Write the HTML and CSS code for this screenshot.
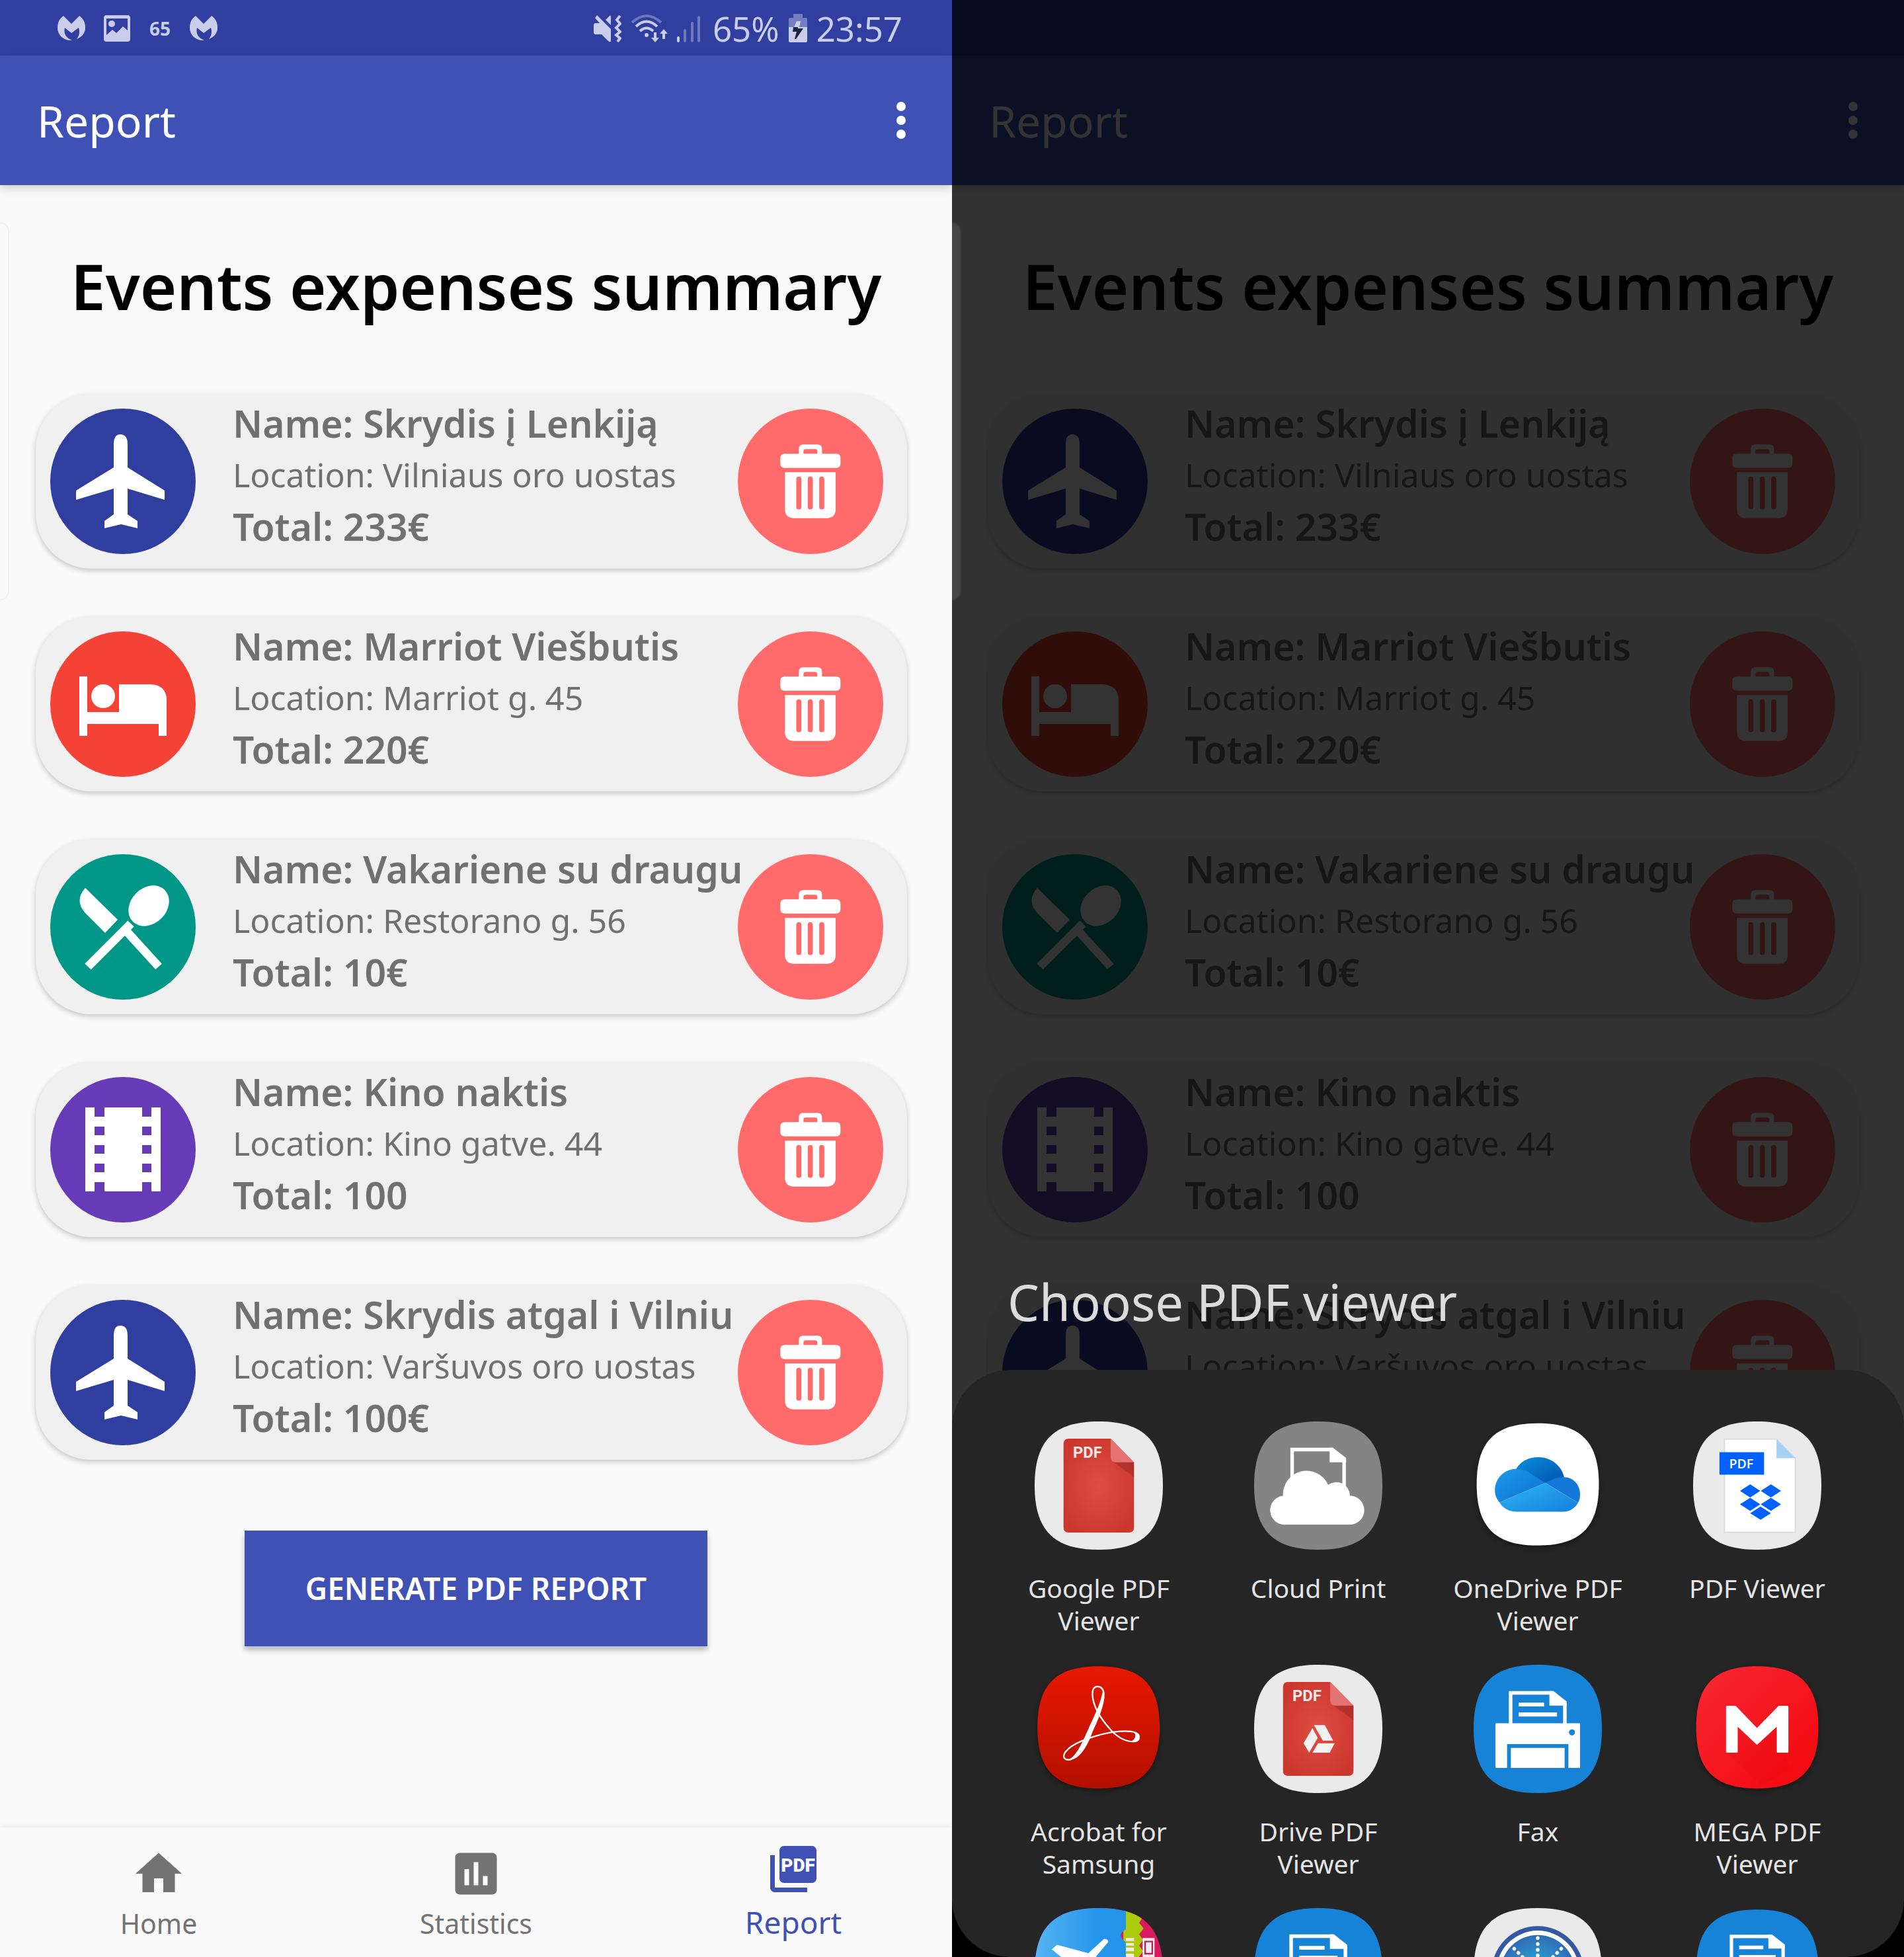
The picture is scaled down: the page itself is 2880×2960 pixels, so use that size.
FILE: index.html
```
<!DOCTYPE html>
<html lang="en">
<head>
<meta charset="utf-8">
<meta name="viewport" content="width=device-width, initial-scale=1">
<title>Report</title>
<link rel="stylesheet" href="styles.css">
</head>
<body>
<svg class="sprite" aria-hidden="true">
  <defs>
    <linearGradient id="acrobat-bg" x1="0" y1="0" x2="0" y2="1"><stop offset="0" stop-color="#e81800"/><stop offset="1" stop-color="#b31000"/></linearGradient>
    <linearGradient id="mega-bg" x1="0" y1="0" x2="1" y2="1"><stop offset="0.1" stop-color="#f6262f"/><stop offset="0.8" stop-color="#f30c14"/></linearGradient>
    <radialGradient id="pdf-red" cx="0.5" cy="0.5" r="0.6"><stop offset="0" stop-color="#df4d43"/><stop offset="1" stop-color="#cb362d"/></radialGradient>
    <linearGradient id="od-back" x1="0" y1="0" x2="1" y2="1"><stop offset="0.2" stop-color="#0883d4"/><stop offset="0.9" stop-color="#0058b0"/></linearGradient>
    <linearGradient id="od-left" x1="0" y1="0" x2="1" y2="1"><stop offset="0" stop-color="#1c9ceb"/><stop offset="0.8" stop-color="#0f75d6"/></linearGradient>
    <linearGradient id="od-front" x1="0" y1="0" x2="1" y2="1"><stop offset="0.1" stop-color="#2cb0f0"/><stop offset="1" stop-color="#1480dc"/></linearGradient>
    <linearGradient id="travel-bg" x1="0" y1="0" x2="1" y2="0"><stop offset="0" stop-color="#55b6f2"/><stop offset="0.7" stop-color="#2494ea"/></linearGradient>
    <radialGradient id="globe-bg"><stop offset="0" stop-color="#2ab4d8"/><stop offset="1" stop-color="#2f6cb5"/></radialGradient>
    <path id="squircle" d="M253 0C430 0 506 76 506 253S430 506 253 506S0 430 0 253S76 0 253 0Z"/>
    <clipPath id="squircle-clip"><use href="#squircle"/></clipPath>
    <g id="folded-doc">
      <path d="M146 236V111H310L360 150V236" fill="none" stroke="#fff" stroke-width="14"/>
      <path d="M299 104H315L367 145V161H299ZM178 149H278V164H178ZM178 188H329V204H178Z" fill="#fff"/>
    </g>
    <g id="red-pdf">
      <path d="M134 68H300L392 161V418Q392 438 372 438H134Q114 438 114 418V88Q114 68 134 68Z" fill="url(#pdf-red)"/>
      <path d="M312 161H392V218Z" fill="#000" opacity="0.15"/>
      <path d="M300 68L392 161H320Q300 161 300 141Z" fill="#e57373"/>
      <text x="151" y="144" class="glyph-pdf">PDF</text>
    </g>
  </defs>
  <symbol id="i-plane" viewBox="0 0 220 220">
    <path d="M106 39Q117 39 117 54V89L173 124V138L117 121V160L132 170V181L107 175L82 181V170L96 160V121L39 138V124L96 89V54Q96 39 106 39Z" fill="#fff"/>
  </symbol>
  <symbol id="i-bed" viewBox="0 0 220 220">
    <path d="M44 68H56V122H104V80H153Q176 82 176 104V158H164V140H56V158H44Z" fill="#fff"/><circle cx="80" cy="98" r="18" fill="#fff"/>
  </symbol>
  <symbol id="i-food" viewBox="0 0 220 220">
    <path d="M53 51L102 99L83 119L53 89Q36 70 53 51Z" fill="#fff"/>
    <path d="M57 170L122 105M114 115L164 170" fill="none" stroke="#fff" stroke-width="13"/>
    <ellipse cx="149" cy="78" rx="34" ry="27" transform="rotate(-45 149 78)" fill="#fff"/>
  </symbol>
  <symbol id="i-film" viewBox="0 0 220 220">
    <path fill-rule="evenodd" fill="#fff" d="M53 46H67V60H82V46H139V60H153V46H167V173H153V159H139V173H82V159H67V173H53ZM67 75V88H82V75ZM67 103V116H82V103ZM67 131V144H82V131ZM139 75V88H153V75ZM139 103V116H153V103ZM139 131V144H153V131Z"/>
  </symbol>
  <symbol id="i-trash" viewBox="110 114 660 660">
    <path fill-rule="evenodd" fill="#fff" d="M323 319H387V297Q387 277 407 277H472Q492 277 492 297V319H556Q576 319 576 339V363Q576 383 556 383H323Q303 383 303 363V339Q303 319 323 319ZM408 319H471V308Q471 298 461 298H418Q408 298 408 308Z"/>
    <path d="M324 403H554V570Q554 611 513 611H365Q324 611 324 570Z" fill="#fff"/>
    <path d="M387 434V560M439 434V560M491 434V560" stroke="#ff6b6b" stroke-width="23" stroke-linecap="round"/>
  </symbol>
  <symbol id="i-more" viewBox="0 0 24 24"><path fill="currentColor" d="M12 8a2 2 0 1 0 0-4 2 2 0 0 0 0 4zm0 2a2 2 0 1 0 0 4 2 2 0 0 0 0-4zm0 6a2 2 0 1 0 0 4 2 2 0 0 0 0-4z"/></symbol>
  <symbol id="i-malware" viewBox="0 0 42 38">
    <path fill="currentColor" d="M9 0L21 12L33 0C39 4 42 10 42 18C42 26 37 32 29 35C33 30 34 24 32 18L21 26L11 18C9 26 12 33 22 37C9 38 0 29 0 18C0 10 3 4 9 0Z"/>
  </symbol>
  <symbol id="i-image" viewBox="0 0 40 40">
    <path fill="currentColor" fill-rule="evenodd" d="M4 0H36Q40 0 40 4V36Q40 40 36 40H4Q0 40 0 36V4Q0 0 4 0ZM4 5V30L13 22L19 27L29 17L36 23V5Z"/><circle cx="12" cy="13" r="5" fill="currentColor"/>
  </symbol>
</svg>

<div class="gallery">
  <section class="phone">
    <div class="statusbar">
      <div class="status-group status-left">
        <svg class="s-icon s-malware"><use href="#i-malware"/></svg>
        <svg class="s-icon s-image"><use href="#i-image"/></svg>
        <span class="status-temp">65</span>
        <svg class="s-icon s-malware"><use href="#i-malware"/></svg>
      </div>
      <div class="status-group status-right">
        <svg class="s-mute" viewBox="0 0 42 44" fill="currentColor"><path d="M0 17Q0 14 3 14H9L2 6L5 2L26 23V42Q24 43 22 41L12 31H3Q0 31 0 28Z"/><path d="M18 9L24 3Q26 2 26 4V17Z"/><path d="M40 3L35 9L40 15L34 21L40 27L34 32L40 37L36 42" fill="none" stroke="currentColor" stroke-width="4"/></svg>
        <svg class="s-wifi" viewBox="0 0 56 44" fill="none" stroke="currentColor" stroke-width="4"><path d="M2 13Q24-7 46 13" opacity="0.4"/><path d="M8 19Q24 4 40 19M14 26Q24 17 34 26"/><circle cx="24" cy="32" r="3" fill="currentColor" stroke="none"/><path d="M37 28V38M50 38V27" stroke-width="4"/><path d="M31 36H43L37 43ZM44 30H56L50 23Z" fill="currentColor" stroke="none"/></svg>
        <svg class="s-signal" viewBox="0 0 36 44" stroke="currentColor" stroke-width="4" stroke-linecap="round"><path d="M2 36V41"/><path d="M12 25V41M23 14V41M33 5V41" opacity="0.4"/></svg>
        <span class="status-text">65%</span>
        <svg class="s-battery" viewBox="0 0 28 44"><path d="M7 0H21V6H26Q28 6 28 8V20H0V8Q0 6 2 6H7Z" fill="currentColor" opacity="0.45"/><path d="M0 20H28V41Q28 43 26 43H2Q0 43 0 41Z" fill="currentColor"/><path d="M12 11H18L16 20H8Z" fill="currentColor"/><path d="M7 20H14V22H22L11 38H9L12 27H6Z" fill="#1c2143"/></svg>
        <time class="status-text">23:57</time>
      </div>
    </div>
    <header class="appbar">
      <h1 class="appbar-title">Report</h1>
      <button class="menu-button" type="button" aria-label="More options"><svg class="menu-icon"><use href="#i-more"/></svg></button>
    </header>
    <main class="content">
      <div class="edge-handle"></div>
      <h2 class="heading">Events expenses summary</h2>
      <ul class="events">
        <li class="event"><span class="badge badge-flight"><svg><use href="#i-plane"/></svg></span><div class="event-text"><p class="event-name">Name: Skrydis į Lenkiją</p><p class="event-location">Location: Vilniaus oro uostas</p><p class="event-name">Total: 233€</p></div><button class="badge badge-delete" type="button" aria-label="Delete"><svg><use href="#i-trash"/></svg></button></li>
        <li class="event"><span class="badge badge-hotel"><svg><use href="#i-bed"/></svg></span><div class="event-text"><p class="event-name">Name: Marriot Viešbutis</p><p class="event-location">Location: Marriot g. 45</p><p class="event-name">Total: 220€</p></div><button class="badge badge-delete" type="button" aria-label="Delete"><svg><use href="#i-trash"/></svg></button></li>
        <li class="event"><span class="badge badge-food"><svg><use href="#i-food"/></svg></span><div class="event-text"><p class="event-name">Name: Vakariene su draugu</p><p class="event-location">Location: Restorano g. 56</p><p class="event-name">Total: 10€</p></div><button class="badge badge-delete" type="button" aria-label="Delete"><svg><use href="#i-trash"/></svg></button></li>
        <li class="event"><span class="badge badge-film"><svg><use href="#i-film"/></svg></span><div class="event-text"><p class="event-name">Name: Kino naktis</p><p class="event-location">Location: Kino gatve. 44</p><p class="event-name">Total: 100</p></div><button class="badge badge-delete" type="button" aria-label="Delete"><svg><use href="#i-trash"/></svg></button></li>
        <li class="event"><span class="badge badge-flight"><svg><use href="#i-plane"/></svg></span><div class="event-text"><p class="event-name">Name: Skrydis atgal i Vilniu</p><p class="event-location">Location: Varšuvos oro uostas</p><p class="event-name">Total: 100€</p></div><button class="badge badge-delete" type="button" aria-label="Delete"><svg><use href="#i-trash"/></svg></button></li>
      </ul>
      <button class="generate" type="button">GENERATE PDF REPORT</button>
    </main>
    <nav class="tabs">
      <a class="tab" href="#home"><svg class="tab-icon" viewBox="0 0 24 24"><path fill="currentColor" d="M10 20v-6h4v6h5v-8h3L12 3 2 12h3v8z"/></svg>Home</a>
      <a class="tab" href="#statistics"><svg class="tab-icon" viewBox="0 0 24 24"><path fill="currentColor" d="M19 3H5c-1.100 0-2 .9-2 2v14c0 1.100.9 2 2 2h14c1.100 0 2-.9 2-2V5c0-1.100-.9-2-2-2zM9 17H7v-7h2v7zm4 0h-2V7h2v10zm4 0h-2v-4h2v4z"/></svg>Statistics</a>
      <a class="tab tab-active" href="#report"><svg class="tab-icon" viewBox="0 0 24 24"><path fill="currentColor" d="M20 2H8c-1.100 0-2 .9-2 2v12c0 1.100.9 2 2 2h12c1.100 0 2-.9 2-2V4c0-1.100-.9-2-2-2zM4 6H2v14c0 1.100.9 2 2 2h14v-2H4V6z"/><text x="14" y="13" class="tab-pdf">PDF</text></svg>Report</a>
    </nav>
  </section>

  <section class="phone">
    <div class="statusbar"></div>
    <header class="appbar">
      <h1 class="appbar-title">Report</h1>
      <button class="menu-button" type="button" aria-label="More options"><svg class="menu-icon"><use href="#i-more"/></svg></button>
    </header>
    <main class="content">
      <h2 class="heading">Events expenses summary</h2>
      <ul class="events">
        <li class="event"><span class="badge badge-flight"><svg><use href="#i-plane"/></svg></span><div class="event-text"><p class="event-name">Name: Skrydis į Lenkiją</p><p class="event-location">Location: Vilniaus oro uostas</p><p class="event-name">Total: 233€</p></div><button class="badge badge-delete" type="button" aria-label="Delete"><svg><use href="#i-trash"/></svg></button></li>
        <li class="event"><span class="badge badge-hotel"><svg><use href="#i-bed"/></svg></span><div class="event-text"><p class="event-name">Name: Marriot Viešbutis</p><p class="event-location">Location: Marriot g. 45</p><p class="event-name">Total: 220€</p></div><button class="badge badge-delete" type="button" aria-label="Delete"><svg><use href="#i-trash"/></svg></button></li>
        <li class="event"><span class="badge badge-food"><svg><use href="#i-food"/></svg></span><div class="event-text"><p class="event-name">Name: Vakariene su draugu</p><p class="event-location">Location: Restorano g. 56</p><p class="event-name">Total: 10€</p></div><button class="badge badge-delete" type="button" aria-label="Delete"><svg><use href="#i-trash"/></svg></button></li>
        <li class="event"><span class="badge badge-film"><svg><use href="#i-film"/></svg></span><div class="event-text"><p class="event-name">Name: Kino naktis</p><p class="event-location">Location: Kino gatve. 44</p><p class="event-name">Total: 100</p></div><button class="badge badge-delete" type="button" aria-label="Delete"><svg><use href="#i-trash"/></svg></button></li>
        <li class="event"><span class="badge badge-flight"><svg><use href="#i-plane"/></svg></span><div class="event-text"><p class="event-name">Name: Skrydis atgal i Vilniu</p><p class="event-location">Location: Varšuvos oro uostas</p></div><button class="badge badge-delete" type="button" aria-label="Delete"><svg><use href="#i-trash"/></svg></button></li>
      </ul>
    </main>
    <div class="chooser" role="dialog" aria-labelledby="chooser-title">
      <div class="edge-handle edge-handle-light"></div>
      <h2 class="chooser-title" id="chooser-title">Choose PDF viewer</h2>
      <div class="sheet-backdrop">
        <div class="sheet">
          <button class="app" type="button">
            <svg class="app-icon" viewBox="0 0 506 506"><use href="#squircle" fill="#eaeaea"/><use href="#red-pdf"/></svg>
            <span>Google PDF Viewer</span>
          </button>
          <button class="app" type="button">
            <svg class="app-icon" viewBox="0 0 506 506"><use href="#squircle" fill="#848484"/><g transform="translate(-908 -26)"><path d="M1058 270V137H1215L1263 176V300" fill="none" stroke="#fff" stroke-width="14"/><path d="M1206 130H1219L1271 170V187H1206Z" fill="#fff"/><path d="M1035 433A57 57 0 0 1 1022 319A93 93 0 0 1 1200 276A54 54 0 0 1 1286 319A57 57 0 0 1 1285 433Z" fill="#fff"/></g></svg>
            <span>Cloud Print</span>
          </button>
          <button class="app" type="button">
            <svg class="app-icon app-icon-raised" viewBox="0 0 506 506"><use href="#squircle" fill="#fff" transform="translate(12 7) scale(0.953)"/><g transform="translate(-50 -26)"><path d="M218 213C235 185 265 167 305 167C355 167 397 200 407 246L333 270Z" fill="url(#od-back)"/><path d="M407 246C445 246 470 278 470 315C470 328 467 338 462 347L333 268C360 255 380 246 407 246Z" fill="#1478d8"/><path d="M218 213C245 213 262 222 275 232L333 268L152 345C140 330 134 315 134 297C134 250 172 213 218 213Z" fill="url(#od-left)"/><path d="M333 268L462 347C450 368 430 382 405 382H218C190 382 165 368 152 345Z" fill="url(#od-front)"/></g></svg>
            <span>OneDrive PDF Viewer</span>
          </button>
          <button class="app" type="button">
            <svg class="app-icon" viewBox="0 0 506 506"><use href="#squircle" fill="#eaeaea"/><g transform="translate(-918 -26)"><path d="M1042 96H1247L1321 171V463H1042Z" fill="#fff" stroke="#d8d8d8" stroke-width="4"/><path d="M1247 96L1321 171H1247Z" fill="#a6d2f5"/><path d="M1022 147H1198V236H1022Z" fill="#0061fe"/><text x="1108" y="211" class="glyph-dropbox">PDF</text><path d="M1143 274L1183 300L1143 326L1103 300ZM1225 274L1265 300L1225 326L1185 300ZM1143 327L1183 353L1143 379L1103 353ZM1225 327L1265 353L1225 379L1185 353ZM1184 362L1225 388L1184 414L1143 388Z" fill="#0061fe"/></g></svg>
            <span>PDF Viewer</span>
          </button>
          <button class="app" type="button">
            <svg class="app-icon app-icon-raised" viewBox="0 0 506 506"><use href="#squircle" fill="url(#acrobat-bg)" transform="translate(11 6) scale(0.953)"/><g transform="translate(-40 -988)"><path d="M175 1363C200 1363 225 1320 255 1270C280 1225 313 1150 313 1105C313 1085 302 1074 288 1074C275 1074 268 1085 268 1105C270 1155 308 1210 345 1250C372 1277 400 1291 430 1291C446 1291 452 1284 452 1273C452 1255 430 1250 395 1250C330 1250 230 1280 185 1310C160 1328 155 1340 155 1348C155 1358 162 1363 175 1363Z" fill="none" stroke="#fff" stroke-width="6"/><path d="M168 1363C200 1358 225 1300 248 1250C272 1195 302 1140 310 1085C320 1130 285 1205 262 1270C238 1330 205 1370 168 1363ZM424 1253C446 1256 438 1286 420 1290C455 1300 468 1260 424 1253Z" fill="#fff"/></g></svg>
            <span>Acrobat for Samsung</span>
          </button>
          <button class="app" type="button">
            <svg class="app-icon" viewBox="0 0 506 506"><use href="#squircle" fill="#eaeaea"/><use href="#red-pdf"/><path transform="translate(-908 -988)" d="M1138 1238L1159 1276L1125 1335L1103 1298ZM1144 1226H1187L1220 1287H1179ZM1160 1298H1226L1206 1335H1138Z" fill="#f1f1f1"/></svg>
            <span>Drive PDF Viewer</span>
          </button>
          <button class="app" type="button">
            <svg class="app-icon" viewBox="0 0 506 506"><use href="#squircle" fill="#1783d7"/><use href="#folded-doc"/><path fill="#fff" fill-rule="evenodd" d="M86 231H420V407H374V313H132V407H86ZM388 255A12 12 0 1 0 388 279A12 12 0 1 0 388 255ZM147 328H359V407H147Z"/></svg>
            <span>Fax</span>
          </button>
          <button class="app" type="button">
            <svg class="app-icon app-icon-raised" viewBox="0 0 506 506"><use href="#squircle" fill="url(#mega-bg)" transform="translate(12 6) scale(0.953)"/><g transform="translate(-918 -988)"><path d="M1052 1335L1190 1465L1300 1400L1248 1232L1170 1300L1094 1232Z" fill="#c00" opacity="0.08"/><path d="M1052 1331V1154H1084L1170 1243L1257 1154H1290V1331H1252V1223L1170 1299L1090 1223V1331Z" fill="#fff" stroke="#fff" stroke-width="8" stroke-linejoin="round"/></g></svg>
            <span>MEGA PDF Viewer</span>
          </button>
          <button class="app" type="button" aria-label="Travel">
            <svg class="app-icon" viewBox="0 0 506 506"><g clip-path="url(#squircle-clip)"><path d="M0 0H506V506H0Z" fill="#d81b60"/><path d="M350 0H404L424 40L412 58L430 80L412 104L428 126L412 148L428 170L412 192V506H350Z" fill="#aacc0a"/><path d="M426 118H473V193H426ZM360 118H392V130H360ZM360 138H392V148H360ZM360 156H392V170H360ZM360 180H392V193H360Z" fill="#f3e9ee"/><path d="M436 132H464V180H436Z" fill="none" stroke="#b0245a" stroke-width="6"/><path d="M0 0H360V85Q340 95 340 108Q342 124 360 134V506H0Z" fill="url(#travel-bg)"/><path d="M88 145L68 163L150 230H250L243 190L290 134Q292 122 274 121L212 178Z" fill="#fff"/></g></svg>
          </button>
          <button class="app" type="button" aria-label="Print">
            <svg class="app-icon" viewBox="0 0 506 506"><use href="#squircle" fill="#1783d7"/><use href="#folded-doc"/></svg>
          </button>
          <button class="app" type="button" aria-label="Browser">
            <svg class="app-icon" viewBox="0 0 506 506"><use href="#squircle" fill="#eaeaea"/><circle cx="253" cy="253" r="182" fill="#3459a3"/><circle cx="253" cy="253" r="164" fill="#fff"/><circle cx="253" cy="253" r="147" fill="url(#globe-bg)"/><path d="M253 118V240M160 160L240 240M346 160L266 240" stroke="#fff" stroke-width="14" stroke-linecap="round" stroke-dasharray="1 22"/></svg>
          </button>
          <button class="app" type="button" aria-label="Scan">
            <svg class="app-icon" viewBox="0 0 506 506"><g transform="translate(12 6) scale(0.953)"><use href="#squircle" fill="#1783d7"/><use href="#folded-doc"/></g></svg>
          </button>
        </div>
      </div>
    </div>
  </section>
</div>
</body>
</html>
```
FILE: styles.css
```
* { box-sizing: border-box; }

body {
  margin: 0;
  background: #000;
  font-family: "Noto Sans", "Open Sans", sans-serif;
}

h1, h2, p, ul { margin: 0; padding: 0; }
button { border: 0; padding: 0; font-family: inherit; cursor: pointer; }
.sprite { position: absolute; width: 0; height: 0; }

.gallery {
  display: grid;
  grid-template-columns: 1fr 1fr;
}

.phone {
  position: relative;
  display: flex;
  flex-direction: column;
  min-height: 100vh;
  overflow: hidden;
  background: #fafafa;
}

/* Status bar */
.statusbar {
  display: flex;
  justify-content: space-between;
  align-items: center;
  height: 84px;
  padding: 2px 75px 0 87px;
  background: #303f9f;
  color: #c9cdea;
}
.status-group { display: flex; align-items: center; }
.status-left { gap: 28px; }
.status-right { gap: 14px; }
.s-malware { width: 42px; height: 38px; }
.s-image { width: 40px; height: 40px; }
.status-temp { padding: 0 1px; font-size: 28px; font-weight: 700; line-height: 40px; }
.status-text { font-size: 51px; line-height: 80px; }
.s-mute { width: 42px; height: 44px; }
.s-wifi { width: 56px; height: 44px; }
.s-signal { width: 36px; height: 44px; margin-right: 4px; }
.s-battery { width: 28px; height: 44px; }

/* App bar */
.appbar {
  display: flex;
  justify-content: space-between;
  align-items: center;
  height: 196px;
  padding: 0 35px 0 56px;
  background: #3f51b5;
  color: #fff;
  box-shadow: 0 4px 14px rgba(0, 0, 0, 0.2);
  z-index: 1;
}
.appbar-title { font-size: 66px; font-weight: 400; line-height: 90px; }
.menu-button { display: flex; background: none; color: inherit; }
.menu-icon { width: 84px; height: 84px; }

/* Event list */
.content {
  position: relative;
  display: flex;
  flex: 1;
  flex-direction: column;
  padding-top: 88px;
}
.heading {
  margin-bottom: 100px;
  color: #000;
  font-size: 95px;
  font-weight: 600;
  line-height: 128px;
  text-align: center;
}
.events {
  display: grid;
  grid-template-columns: minmax(0, 1fr);
  gap: 73px;
  margin: 0 68px 0 54px;
  list-style: none;
}
.event {
  display: flex;
  align-items: center;
  height: 264px;
  padding: 0 36px 0 22px;
  border-radius: 84px;
  background: #f0f0f0;
  box-shadow: 0 3px 8px rgba(0, 0, 0, 0.22);
}
.event-text {
  flex: 1;
  align-self: flex-start;
  min-width: 0;
  padding: 4px 0 0 56px;
  color: #707070;
  white-space: nowrap;
}
.event-name { font-size: 57px; font-weight: 600; line-height: 80px; }
.event-location { font-size: 50px; line-height: 76px; }

.badge {
  display: flex;
  flex: none;
  width: 220px;
  height: 220px;
  border-radius: 50%;
}
.badge svg { width: 100%; height: 100%; }
.badge-flight { background: #303f9f; }
.badge-hotel { background: #f44336; }
.badge-food { background: #009688; }
.badge-film { background: #673ab7; }
.badge-delete { background: #ff6b6b; }

.generate {
  align-self: center;
  margin-top: 107px;
  padding: 0 92px;
  background: #3f51b5;
  box-shadow: 0 6px 8px rgba(0, 0, 0, 0.26);
  color: #fff;
  font-size: 46px;
  font-weight: 600;
  line-height: 175px;
}

.edge-handle {
  position: absolute;
  top: 56px;
  left: 0;
  width: 14px;
  height: 572px;
  border: 2px solid #f0f0f0;
  border-left: 0;
  border-radius: 0 14px 14px 0;
}
.edge-handle-light {
  top: 336px;
  border-color: #3c3c3c;
  background: #454545;
}

/* Bottom tabs */
.tabs {
  display: grid;
  grid-template-columns: repeat(3, 1fr);
  height: 196px;
  background: #fafafa;
  box-shadow: 0 -2px 8px rgba(0, 0, 0, 0.08);
}
.tab {
  display: flex;
  flex-direction: column;
  align-items: center;
  justify-content: flex-end;
  gap: 5px;
  padding-bottom: 23px;
  color: #737373;
  font-size: 41px;
  line-height: 56px;
  text-decoration: none;
}
.tab-active {
  gap: 8px;
  color: #3f51b5;
  font-size: 46px;
  line-height: 60px;
}
.tab-icon { width: 84px; height: 84px; }
.tab-pdf {
  fill: #fafafa;
  font-family: Roboto, sans-serif;
  font-size: 8px;
  font-weight: 900;
  text-anchor: middle;
}

/* Viewer chooser over the dimmed screen */
.chooser {
  position: absolute;
  inset: 0;
  z-index: 2;
  display: flex;
  flex-direction: column;
  justify-content: flex-end;
  background: rgba(0, 0, 0, 0.8);
}
.chooser-title {
  padding: 0 84px 51px;
  color: #dcdcdc;
  font-size: 76px;
  font-weight: 400;
  line-height: 104px;
}
.sheet-backdrop { background: linear-gradient(transparent 50%, #000 50%); }
.sheet {
  display: grid;
  grid-template-columns: repeat(4, 1fr);
  row-gap: 41px;
  align-content: start;
  height: 30vh;
  padding: 78px 56px 0;
  overflow: hidden;
  border-radius: 88px;
  background: #252525;
}
.app {
  display: flex;
  flex-direction: column;
  align-items: center;
  gap: 33px;
  min-height: 327px;
  padding: 0 24px;
  background: none;
  color: #e4e4e4;
  font-size: 39px;
  line-height: 49px;
}
.app-icon { flex: none; width: 194px; height: 194px; }
.app-icon-raised { filter: drop-shadow(0 3px 3px rgba(0, 0, 0, 0.4)); }
.glyph-pdf {
  fill: #fbeaea;
  font-family: Roboto, sans-serif;
  font-size: 62px;
  font-weight: 700;
}
.glyph-dropbox {
  fill: #fff;
  font-family: "Open Sans", sans-serif;
  font-size: 51px;
  font-weight: 600;
  text-anchor: middle;
}
```
